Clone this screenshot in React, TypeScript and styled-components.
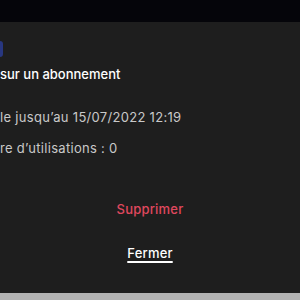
import styled, { createGlobalStyle } from "styled-components";

const GlobalStyle = createGlobalStyle`
  html, body {
    margin: 0;
    padding: 0;
    background: #b3b3b3;
    font-family: Inter, "Open Sans", sans-serif;
  }
`;

const Page = styled.div`
  width: 300px;
  height: 300px;
  display: flex;
  flex-direction: column;
  overflow: hidden;
`;

const TopBar = styled.div`
  height: 22px;
  background: #05050a;
`;

const Panel = styled.div`
  height: 271px;
  background: #1e1e1e;
  display: flex;
  flex-direction: column;
`;

const Badge = styled.div`
  width: 3px;
  height: 16px;
  margin-top: 19px;
  background: #283780;
  border-radius: 0 3px 3px 0;
`;

const Title = styled.div`
  margin-top: 8px;
  font-size: 13px;
  font-weight: 500;
  color: #ffffff;
  line-height: 18px;
`;

const InfoLine = styled.div<{ $gap: number }>`
  font-size: 13px;
  letter-spacing: 0.3px;
  color: #c9c9c9;
  line-height: 18px;
  margin-top: ${(p) => p.$gap}px;
`;

const Actions = styled.div`
  display: flex;
  flex-direction: column;
  align-items: center;
  gap: 26px;
  margin-top: 43px;
`;

const ActionButton = styled.button<{ $danger?: boolean }>`
  background: none;
  border: none;
  padding: 0;
  font-family: inherit;
  font-size: 13px;
  font-weight: 500;
  letter-spacing: 0.2px;
  line-height: 18px;
  color: ${(p) => (p.$danger ? "#e0485e" : "#ffffff")};
  text-decoration: ${(p) => (p.$danger ? "none" : "underline")};
  text-decoration-thickness: 1.5px;
  text-underline-offset: 3px;
  cursor: pointer;
`;

export default function App() {
  return (
    <>
      <GlobalStyle />
      <Page>
        <TopBar />
        <Panel>
          <Badge />
          <Title>sur un abonnement</Title>
          <InfoLine $gap={25}>le jusqu’au 15/07/2022 12:19</InfoLine>
          <InfoLine $gap={13}>re d’utilisations : 0</InfoLine>
          <Actions>
            <ActionButton $danger>Supprimer</ActionButton>
            <ActionButton>Fermer</ActionButton>
          </Actions>
        </Panel>
      </Page>
    </>
  );
}
